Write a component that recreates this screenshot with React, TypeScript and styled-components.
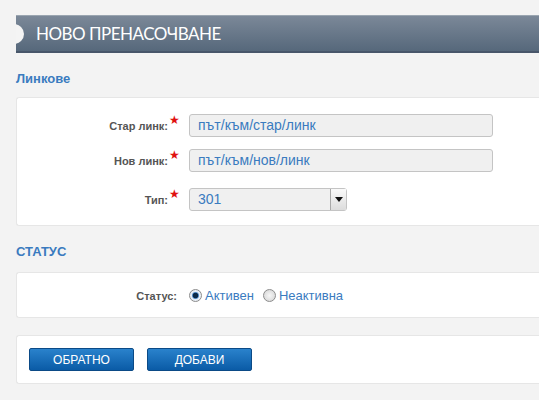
import React from "react";
import styled, { createGlobalStyle } from "styled-components";

const GlobalStyle = createGlobalStyle`
  html, body {
    margin: 0;
    padding: 0;
    background: #f3f3f3;
    font-family: "Liberation Sans", Arial, sans-serif;
  }
`;

const Page = styled.div`
  width: 539px;
  height: 400px;
  overflow: hidden;
  padding: 15px 0 0 16px;
  box-sizing: border-box;
`;

const TitleBar = styled.div`
  position: relative;
  height: 38px;
  display: flex;
  align-items: center;
  padding-left: 20px;
  overflow: hidden;
  background: linear-gradient(#7b8898, #56687b);
  border-top: 1px solid #9aa5b0;
  border-bottom: 2px solid #48566a;
  box-sizing: border-box;
  color: #fff;
  font-family: "Lato", "Liberation Sans", sans-serif;
  font-size: 17px;
  letter-spacing: -0.5px;
  margin-right: -10px;
`;

const Knob = styled.span`
  position: absolute;
  left: -12px;
  top: 8px;
  width: 20px;
  height: 20px;
  border-radius: 50%;
  background: #f4f4f4;
`;

const SectionTitle = styled.div<{ $below: number }>`
  color: #3a7bbf;
  font-weight: bold;
  font-size: 13px;
  line-height: 16px;
  padding: 18px 0 ${(p) => p.$below}px;
`;

const Panel = styled.div<{ $pad: string; $top?: number }>`
  background: #fff;
  border: 1px solid #e6e6e6;
  border-right: none;
  border-radius: 3px 0 0 3px;
  padding: ${(p) => p.$pad};
  margin-top: ${(p) => p.$top || 0}px;
`;

const FormRow = styled.div<{ $below?: number }>`
  display: flex;
  align-items: center;
  height: 23px;
  margin-bottom: ${(p) => p.$below || 0}px;
`;

const Label = styled.label`
  width: 151px;
  text-align: right;
  color: #555;
  font-family: "Liberation Sans", Arial, sans-serif;
  font-size: 11px;
  font-weight: bold;
`;

const StatusLabel = styled(Label)`
  width: 160px;
  margin-right: 12px;
`;

const Star = styled.span`
  width: 21px;
  color: #e01010;
  font-size: 12px;
  align-self: flex-start;
  margin-top: -1px;
  padding-left: 1px;
  box-sizing: border-box;
`;

const TextInput = styled.div`
  width: 304px;
  height: 23px;
  box-sizing: border-box;
  background: #f0f0f0;
  border: 1px solid #c4c4c4;
  border-radius: 3px;
  color: #3a7bbf;
  font-size: 14px;
  line-height: 21px;
  padding-left: 8px;
`;

const Select = styled.div`
  width: 158px;
  height: 23px;
  box-sizing: border-box;
  display: flex;
  background: #f0f0f0;
  border: 1px solid #c4c4c4;
  border-radius: 3px;
  color: #3a7bbf;
  font-size: 14px;
  line-height: 21px;
`;

const SelectValue = styled.span`
  flex: 1;
  padding-left: 8px;
`;

const SelectArrow = styled.span`
  width: 15px;
  display: flex;
  align-items: center;
  justify-content: center;
  border-left: 1px solid #a8a8a8;
  background: linear-gradient(#fafafa, #dcdcdc);
`;

const Radios = styled.div`
  display: flex;
  align-items: center;
`;

const Radio = styled.span<{ $on?: boolean }>`
  width: 11px;
  height: 11px;
  border-radius: 50%;
  border: 1px solid #8c8c8c;
  background: ${(p) =>
    p.$on
      ? "radial-gradient(circle, #0d2a48 0 2.5px, #4a86c4 3px, #e8eef5 4px)"
      : "radial-gradient(circle, #f6f6f6, #d2d2d2)"};
  margin-left: ${(p) => (p.$on ? "0" : "9px")};
  margin-right: 3px;
`;

const RadioText = styled.span`
  color: #3a7bbf;
  font-size: 13px;
`;

const Buttons = styled.div`
  display: flex;
  gap: 13px;
  padding: 12px 0 12px 12px;
`;

const Button = styled.button`
  width: 105px;
  height: 23px;
  border: 1px solid #0b4a86;
  border-radius: 2px;
  background: linear-gradient(#2a82cc, #0a5ba6);
  color: #fff;
  font-family: "Liberation Sans", Arial, sans-serif;
  font-size: 12px;
  padding: 0;
`;

export default function App() {
  return (
    <>
      <GlobalStyle />
      <Page>
        <TitleBar>
          <Knob />
          НОВО ПРЕНАСОЧВАНЕ
        </TitleBar>

        <SectionTitle $below={10}>Линкове</SectionTitle>
        <Panel $pad="16px 0 14px">
          <FormRow $below={12}>
            <Label>Стар линк:</Label>
            <Star>★</Star>
            <TextInput>път/към/стар/линк</TextInput>
          </FormRow>
          <FormRow $below={16}>
            <Label>Нов линк:</Label>
            <Star>★</Star>
            <TextInput>път/към/нов/линк</TextInput>
          </FormRow>
          <FormRow>
            <Label>Тип:</Label>
            <Star>★</Star>
            <Select>
              <SelectValue>301</SelectValue>
              <SelectArrow>
                <svg width="8" height="5" viewBox="0 0 8 5">
                  <path d="M0 0h8L4 5z" fill="#111" />
                </svg>
              </SelectArrow>
            </Select>
          </FormRow>
        </Panel>

        <SectionTitle $below={12}>СТАТУС</SectionTitle>
        <Panel $pad="11px 0 10px">
          <FormRow>
            <StatusLabel>Статус:</StatusLabel>
            <Radios>
              <Radio $on />
              <RadioText>Активен</RadioText>
              <Radio />
              <RadioText>Неактивна</RadioText>
            </Radios>
          </FormRow>
        </Panel>

        <Panel $pad="0" $top={17}>
          <Buttons>
            <Button>ОБРАТНО</Button>
            <Button>ДОБАВИ</Button>
          </Buttons>
        </Panel>
      </Page>
    </>
  );
}
